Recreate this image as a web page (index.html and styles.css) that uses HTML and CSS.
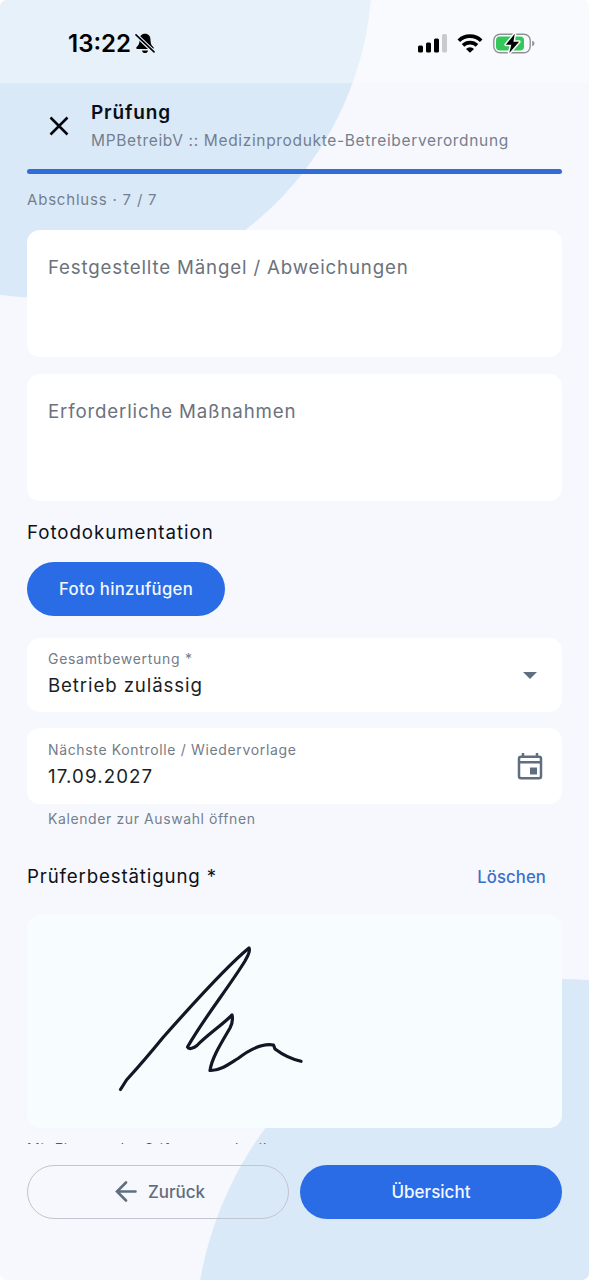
FILE: index.html
```html
<!DOCTYPE html>
<html lang="de">
<head>
<meta charset="utf-8">
<title>Prüfung</title>
<link rel="stylesheet" href="styles.css">
</head>
<body>
<div class="screen">
  <div class="status">
    <span class="time">13:22</span>
    <svg class="bell" width="20" height="21" viewBox="0 0 20 21"><path d="M10 .8c-3.600 0-5.400 2.500-5.500 6C4.400 11 3.600 12.200 1.700 14c-.9.900-.5 2 .6 2h15.400c1.100 0 1.500-1.100.6-2-1.900-1.800-2.700-3-2.800-7.200C15.400 3.300 13.600.8 10 .8zM7 17.400h6c-.3 1.700-1.500 2.700-3 2.700s-2.700-1-3-2.700z"/><path d="M1 2 19 19" stroke="#e8f1fc" stroke-width="3.800"/><path d="M1 1.800 19 18.900" stroke="#000" stroke-width="1.600" stroke-linecap="round"/></svg>
    <span class="spacer"></span>
    <svg class="signal" width="29" height="19" viewBox="0 0 29 19"><rect x="0" y="11.500" width="5" height="7" rx="1.500"/><rect x="8" y="8.500" width="5" height="10" rx="1.500"/><rect x="16" y="4.500" width="5" height="14" rx="1.500"/><rect x="24" y="0" width="5" height="18.500" rx="1.500" fill="#c9cacd"/></svg>
    <svg class="wifi" width="26" height="19" viewBox="0 0 26 19"><path d="M1.800 6.700a16 16 0 0 1 22.400 0M6 11.400a10 10 0 0 1 14 0" fill="none" stroke="#000" stroke-width="3.700"/><path d="M13 18.700 9 14.900a5.700 5.700 0 0 1 8 0z"/></svg>
    <svg class="battery" width="42" height="21" viewBox="0 0 42 21"><rect x=".8" y="1.300" width="36.400" height="18.400" rx="6.200" fill="none" stroke="#909396" stroke-width="1.400"/><path d="M39.200 7.800c3 .7 3 4.700 0 5.400z" fill="#909396"/><rect x="3" y="3.500" width="28" height="14" rx="4" fill="#34c759"/><path d="M21.800.8 12.800 11.700h5.500l-2 8.200 9.800-11.200h-5.700z" stroke="#f9fbfe" stroke-width="3" stroke-linejoin="round"/><path d="M21.800.8 12.800 11.700h5.500l-2 8.200 9.800-11.200h-5.700z"/></svg>
  </div>
  <header class="header">
    <svg class="close" width="20" height="20" viewBox="0 0 20 20"><path d="M1.500 1.500 18.500 18.500M18.500 1.500 1.500 18.500"/></svg>
    <div class="titles">
      <h1 class="title">Prüfung</h1>
      <div class="subtitle">MPBetreibV :: Medizinprodukte-Betreiberverordnung</div>
    </div>
  </header>
  <main class="content">
    <div class="progress"></div>
    <div class="step">Abschluss · 7 / 7</div>
    <div class="card area"><span class="placeholder">Festgestellte Mängel / Abweichungen</span></div>
    <div class="card area"><span class="placeholder">Erforderliche Maßnahmen</span></div>
    <h2 class="section photos">Fotodokumentation</h2>
    <button class="btn primary add">Foto hinzufügen</button>
    <div class="card field rating">
      <div class="pair"><span class="label">Gesamtbewertung *</span><span class="value">Betrieb zulässig</span></div>
      <svg class="caret" width="14" height="7" viewBox="0 0 14 7"><path d="M0 0h14L7 7z"/></svg>
    </div>
    <div class="card field date">
      <div class="pair"><span class="label date-label">Nächste Kontrolle / Wiedervorlage</span><span class="value date-value">17.09.2027</span></div>
      <svg class="calendar" width="26" height="28" viewBox="0 0 26 28"><rect x="2" y="4.700" width="22" height="21.500" rx="2"/><path d="M2 10.300h22M6 4V1M20 4V1"/><path class="day" d="M13 15.500h7v7h-7z"/></svg>
    </div>
    <div class="hint">Kalender zur Auswahl öffnen</div>
    <div class="confirm">
      <h2 class="section">Prüferbestätigung *</h2>
      <span class="link">Löschen</span>
    </div>
    <div class="sign">
      <svg width="535" height="213" viewBox="27 915 535 213"><path d="M120.500 1089.500 126.500 1080C142 1063 152 1051 163 1037.500C190 1007 228 965 249 948C251 951 247 957 245 961C229 987 204 1018 187.500 1047C189 1050 194 1048 197 1045.500C206 1036 222 1025 232 1015C233 1019 232 1024 230 1028C222 1042 212 1057 210 1070.500C220 1071 229 1064 238 1058.500C249 1050 262 1043 273.500 1045L275 1049C283 1055 291 1059 301 1061.300"/></svg>
    </div>
    <div class="note">Mit Finger oder Stift unterschreiben</div>
  </main>
  <footer class="actions">
    <button class="btn outline"><svg width="22" height="21" viewBox="0 0 22 21"><path d="M20.500 10.500H2M11 1.500l-9 9 9 9"/></svg><span>Zurück</span></button>
    <button class="btn primary overview">Übersicht</button>
  </footer>
</div>
</body>
</html>
```
FILE: styles.css
```css
* { box-sizing: border-box; }
body { margin: 0; background: #fff; font-family: Inter, "Noto Sans", sans-serif; }
.screen {
  width: 589px; height: 1280px; overflow: hidden; border-radius: 7px;
  display: flex; flex-direction: column;
  background:
    radial-gradient(circle at 46px -28px, #dae9f8 325.500px, transparent 326.500px),
    radial-gradient(circle at 559.500px 1344px, #dae9f8 364.500px, transparent 365.500px),
    #f6f8fe;
}
.status { flex: none; height: 83px; padding: 4px 54px 0 68px; display: flex; align-items: center; background: rgba(255,255,255,.36); }
.time { font-size: 24px; font-weight: 600; letter-spacing: 0; }
.bell { margin-left: 4px; }
.spacer { flex: 1; }
.wifi { margin-left: 10px; }
.battery { margin-left: 10px; }
.header { flex: none; height: 86px; padding: 17px 27px 0 49px; display: flex; }
.close { margin: 16px 22px 0 0; fill: none; stroke: #05070c; stroke-width: 2.500; }
.title { margin: 0; padding-top: 1px; font-size: 19px; line-height: 24px; font-weight: 600; letter-spacing: .85px; color: #0a0d14; }
.subtitle { margin-top: 5px; font-size: 15.500px; line-height: 22px; letter-spacing: .660px; color: #747f8e; white-space: nowrap; }
.content { flex: none; height: 974.500px; padding: 0 27px; overflow: hidden; }
.progress { height: 5px; border-radius: 3px; background: #326dd6; }
.step { margin-top: 15px; height: 22px; font-size: 15px; line-height: 22px; letter-spacing: .8px; color: #747f8e; }
.card { background: #fff; border-radius: 13px; }
.area { height: 127px; margin-top: 17px; padding: 26px 21px 0; }
.step + .area { margin-top: 19px; }
.placeholder { font-size: 18.700px; line-height: 24px; letter-spacing: .83px; color: #6c727d; white-space: nowrap; }
.section { margin: 0; font-size: 18.700px; line-height: 26px; font-weight: 400; letter-spacing: .85px; color: #0d1017; }
.photos { margin-top: 19px; letter-spacing: .95px; }
.btn { font-family: inherit; font-size: 17px; border: 0; border-radius: 27px; height: 54px; padding: 0; display: flex; align-items: center; justify-content: center; }
.primary { background: #296ce6; color: #f3f8ff; font-weight: 500; }
.add { width: 198px; margin-top: 16px; font-size: 16.700px; letter-spacing: .3px; }
.field { display: flex; align-items: center; justify-content: space-between; padding: 0 19px 0 21px; }
.rating { height: 74px; margin-top: 22px; }
.date { height: 76px; margin-top: 16px; }
.pair { display: flex; flex-direction: column; padding-bottom: 2px; }
.label { font-size: 14px; line-height: 20px; letter-spacing: .7px; color: #747b87; }
.date-label { letter-spacing: .65px; }
.value { margin-top: 4px; font-size: 18.700px; line-height: 26px; letter-spacing: .87px; color: #1b1e24; }
.date-value { letter-spacing: 1.100px; }
.caret { margin-right: 6px; fill: #5f6f80; }
.calendar { margin-bottom: 1px; fill: none; stroke: #5f6f80; stroke-width: 2.500; }
.calendar .day { fill: #5f6f80; stroke: none; }
.hint { margin: 4px 0 0 21px; font-size: 14px; line-height: 22px; letter-spacing: .6px; color: #747f8e; }
.confirm { display: flex; justify-content: space-between; align-items: center; margin-top: 34px; padding-right: 16px; }
.link { padding-bottom: 1px; font-size: 16.700px; font-weight: 500; letter-spacing: .1px; color: #3b70cb; }
.sign { margin-top: 25px; height: 213px; border-radius: 13px; background: #f7fdfe; }
.sign svg { display: block; fill: none; stroke: #141625; stroke-width: 3.200; stroke-linecap: round; stroke-linejoin: round; }
.note { margin-top: 11px; font-size: 14px; line-height: 20px; letter-spacing: .8px; color: #4e5968; }
.actions { flex: none; display: grid; grid-template-columns: 1fr 1fr; gap: 11px; padding: 21px 27px 0; }
.outline { background: transparent; border: 1.500px solid #c2c4cf; color: #626d7d; font-weight: 500; gap: 11px; padding-left: 4px; }
.outline svg { fill: none; stroke: #5f6f80; stroke-width: 2.600; stroke-linecap: round; }
```
